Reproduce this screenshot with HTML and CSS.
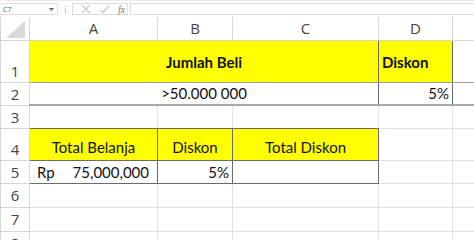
FILE: index.html
```html
<!DOCTYPE html>
<html lang="id">
<head>
    <meta charset="UTF-8">
    <meta name="viewport" content="width=device-width, initial-scale=1.0">
    <title>Jumlah Beli</title>
    <link rel="stylesheet" href="styles.css">
</head>
<body>

    <div class="formula-bar">
        <div class="name-box">
            <span>C7</span>
            <svg class="caret" width="5" height="3" viewBox="0 0 5 3"><path d="M0 0h5L2.5 3z" fill="#666"/></svg>
        </div>
        <div class="grip"></div>
        <div class="fx-tools">
            <svg width="10" height="10" viewBox="0 0 10 10"><path d="M1 1l8 8M9 1l-8 8" stroke="#c8c8c8" stroke-width="1.2"/></svg>
            <svg width="11" height="10" viewBox="0 0 11 10"><path d="M1 5.5l3 3 6-7" stroke="#c8c8c8" stroke-width="1.3" fill="none"/></svg>
            <span class="fx">fx</span>
        </div>
        <div class="formula-input"></div>
    </div>

    <table class="sheet">
        <colgroup>
            <col class="w-head">
            <col class="w-a">
            <col class="w-b">
            <col class="w-c">
            <col class="w-d">
            <col class="w-e">
        </colgroup>
        <tr class="col-heads">
            <th class="corner"><svg width="19" height="17" viewBox="0 0 19 17"><path d="M19 0V17H0z" fill="#dadada"/></svg></th>
            <th>A</th>
            <th>B</th>
            <th>C</th>
            <th>D</th>
            <th></th>
        </tr>
        <tr class="row-1">
            <th>1</th>
            <td colspan="3" class="fill bold center edge-r">Jumlah Beli</td>
            <td class="fill bold edge-l edge-r">Diskon</td>
            <td></td>
        </tr>
        <tr class="row-2 frozen">
            <th>2</th>
            <td colspan="3" class="center edge-r">&gt;50.000 000</td>
            <td class="right edge-l edge-r">5%</td>
            <td></td>
        </tr>
        <tr class="row-3">
            <th>3</th>
            <td class="edge-b"></td>
            <td class="edge-b"></td>
            <td class="edge-b"></td>
            <td></td>
            <td></td>
        </tr>
        <tr class="row-4">
            <th>4</th>
            <td class="fill center edge-r edge-b">Total Belanja</td>
            <td class="fill center edge-l edge-r edge-b">Diskon</td>
            <td class="fill center edge-l edge-r edge-b">Total Diskon</td>
            <td class="edge-l"></td>
            <td></td>
        </tr>
        <tr class="row-5">
            <th>5</th>
            <td class="money edge-r edge-b"><span>Rp</span><span>75,000,000</span></td>
            <td class="right edge-l edge-r edge-b">5%</td>
            <td class="edge-l edge-r edge-b"></td>
            <td class="edge-l"></td>
            <td></td>
        </tr>
        <tr class="row-6">
            <th>6</th>
            <td></td><td></td><td></td><td></td><td></td>
        </tr>
        <tr class="row-7">
            <th>7</th>
            <td></td><td></td><td></td><td></td><td></td>
        </tr>
        <tr class="row-8">
            <th>8</th>
            <td></td><td></td><td></td><td></td><td></td>
        </tr>
    </table>

</body>
</html>
```

FILE: styles.css
```css
body {
    margin: 0;
    background-color: #ffffff;
    font-family: "Open Sans", Arial, sans-serif;
    overflow: hidden;
    width: 474px;
    height: 240px;
}

/* formula bar */

.formula-bar {
    display: flex;
    align-items: center;
    height: 17px;
    border-top: 1px solid #ececec;
    box-sizing: border-box;
}

.name-box {
    display: flex;
    align-items: center;
    justify-content: space-between;
    width: 58px;
    height: 12px;
    box-sizing: border-box;
    border: 1px solid #dcdcdc;
    border-left: none;
    padding: 0 3px 0 3px;
    font-size: 7px;
    color: #555;
}

.grip {
    width: 1px;
    height: 7px;
    margin: 0 5px 0 7px;
    border-left: 1px dotted #a0a0a0;
}

.fx-tools {
    display: flex;
    align-items: center;
    gap: 8px;
    height: 12px;
    width: 56px;
    box-sizing: border-box;
    padding-left: 8px;
    border: 1px solid #dcdcdc;
}

.fx {
    font-family: "Liberation Serif", serif;
    font-style: italic;
    font-size: 10px;
    color: #777;
}

.formula-input {
    flex: 1;
    height: 12px;
    margin-left: 2px;
    box-sizing: border-box;
    border: 1px solid #dcdcdc;
    border-right: none;
}

/* grid */

.sheet {
    border-collapse: collapse;
    table-layout: fixed;
    width: 474px;
    font-family: Lato, "Open Sans", sans-serif;
    font-size: 15px;
    color: #111;
}

.w-head { width: 29px; }
.w-a { width: 128px; }
.w-b { width: 75px; }
.w-c { width: 146px; }
.w-d { width: 74px; }
.w-e { width: 22px; }

.sheet th,
.sheet td {
    border: 1px solid #e1e1e1;
    padding: 0 3px;
    white-space: nowrap;
    overflow: hidden;
}

.sheet th {
    font-family: "Open Sans", sans-serif;
    font-weight: normal;
    color: #444;
    font-size: 15px;
    text-align: center;
    border-color: #d6d6d6;
}

.col-heads { height: 23px; }
.col-heads th { border-top: none; }
.corner { padding: 0; text-align: right; vertical-align: bottom; }
.corner svg { display: block; margin: 0 1px 2px auto; }

.row-1 { height: 42px; }
.row-2 { height: 23px; }
.row-3 { height: 23px; }
.row-4 { height: 32px; }
.row-5 { height: 23px; }
.row-6 { height: 24px; }
.row-7 { height: 24px; }
.row-8 { height: 24px; }

.row-1 th { vertical-align: bottom; padding-bottom: 1px; }
.row-4 th { vertical-align: bottom; padding-bottom: 1px; }

.fill { background-color: #ffff00; }
.bold { font-weight: bold; }
.center { text-align: center; }
.right { text-align: right; }

.sheet .edge-r { border-right-color: #6a6a6a; }
.sheet .edge-l { border-left-color: #6a6a6a; }
.sheet .edge-b { border-bottom-color: #6a6a6a; }

.frozen td {
    border-bottom: 2px solid #a8a8a8;
}

.row-1 td { border-bottom-color: #9a9a9a; }
.row-1 td.bold { padding-top: 2px; }
.row-4 td { vertical-align: bottom; padding-bottom: 4px; }

.money span:first-child { float: left; padding-left: 4px; }
.money span:last-child { float: right; padding-right: 5px; }
```
